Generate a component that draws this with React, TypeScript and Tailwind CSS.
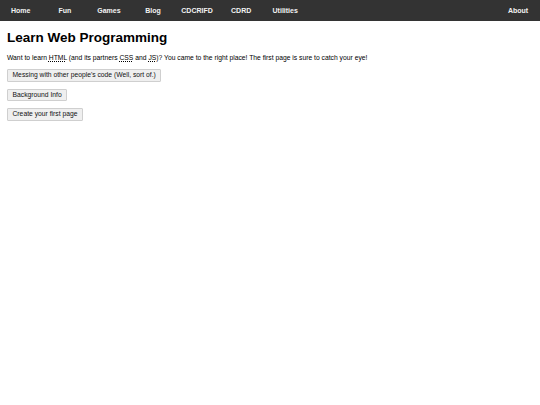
import React from "react";

const navItems = ["Home", "Fun", "Games", "Blog", "CDCRIFD", "CDRD", "Utilities"];

function Btn({ children }: { children: React.ReactNode }) {
  return (
    <div className="flex">
      <button className="h-[12.5px] px-[4.5px] bg-[#efefef] border-[0.5px] border-[#cfcfcf] rounded-[1px] text-[6.75px] leading-[8px] text-[#111]">
        {children}
      </button>
    </div>
  );
}

export default function App() {
  return (
    <div className="min-h-[405px] bg-white text-black" style={{ fontFamily: '"Liberation Sans", Arial, sans-serif' }}>
      <nav className="h-[20.5px] bg-[#333333] flex items-center text-[#f2f2f2] font-bold text-[7px] leading-[8px] pt-[0.5px]">
        <div className="flex ml-[-1.3px]">
          {navItems.map((n) => (
            <div key={n} className="w-[44.08px] text-center">
              {n}
            </div>
          ))}
        </div>
        <div className="ml-auto w-[44px] text-center">About</div>
      </nav>
      <main className="px-[7px]">
        <h1 className="mt-[9px] text-[13.5px] leading-[15.5px] font-bold">Learn Web Programming</h1>
        <p className="mt-[9px] text-[6.75px] leading-[8px]">
          Want to learn <abbr className="underline decoration-dotted decoration-[0.5px]">HTML</abbr> (and its partners{" "}
          <abbr className="underline decoration-dotted decoration-[0.5px]">CSS</abbr> and{" "}
          <abbr className="underline decoration-dotted decoration-[0.5px]">JS</abbr>)? You came to the right place! The first
          page is sure to catch your eye!
        </p>
        <div className="mt-[7px] flex flex-col gap-[7px]">
          <Btn>Messing with other people's code (Well, sort of.)</Btn>
          <Btn>Background Info</Btn>
          <Btn>Create your first page</Btn>
        </div>
      </main>
    </div>
  );
}
